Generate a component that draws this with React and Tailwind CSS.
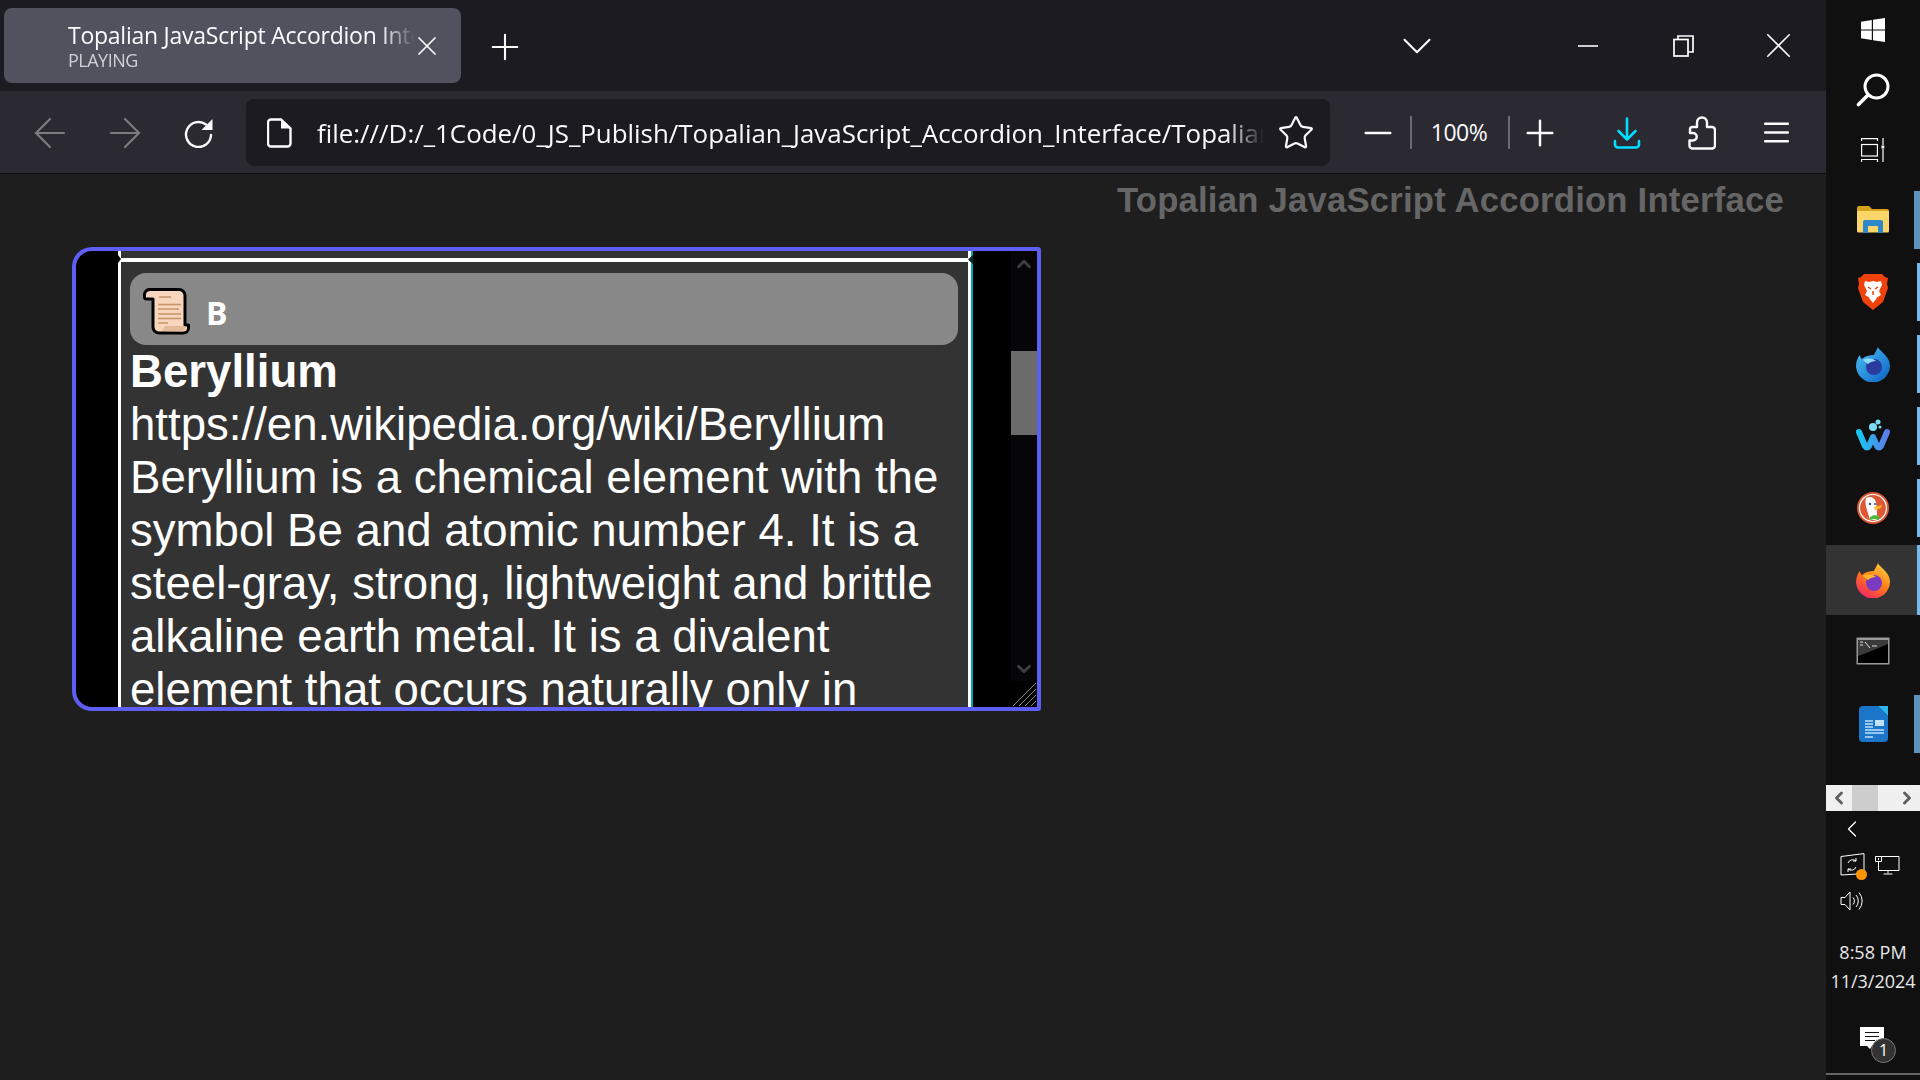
import { X, Plus, Minus, ChevronDown, Star, ChevronUp, ChevronLeft, ChevronRight, ArrowLeft, ArrowRight } from "lucide-react";

const uiFont = "font-['Open_Sans',sans-serif]";

const ReloadIcon = () => (
  <svg width="30" height="30" viewBox="0 0 30 30" fill="none">
    <path d="M27 17a12.500 12.500 0 1 1-5-10.500" stroke="#fbfbfe" strokeWidth="2.400" strokeLinecap="round" />
    <path d="M28.500 1v11H17.500z" fill="#fbfbfe" />
  </svg>
);

const FileIcon = () => (
  <svg width="25" height="30" viewBox="0 0 25 30" fill="none">
    <path d="M4 1.500h10l9.500 9v15a3 3 0 0 1-3 3H4a3 3 0 0 1-3-3v-21a3 3 0 0 1 3-3z" stroke="#fbfbfe" strokeWidth="2.400" />
    <path d="M14 1.500v9h9.500z" fill="#fbfbfe" />
  </svg>
);

const DownloadIcon = () => (
  <svg width="28" height="32" viewBox="0 0 28 32" fill="none" stroke="#00ddff" strokeWidth="2.600" strokeLinecap="round" strokeLinejoin="round">
    <path d="M14 1.500v21M5.500 14l8.500 8.500 8.500-8.500" />
    <path d="M2 24v3.500a3 3 0 0 0 3 3h18a3 3 0 0 0 3-3V24" />
  </svg>
);

const PuzzleIcon = () => (
  <svg width="28" height="34" viewBox="0 0 28 34" fill="none" stroke="#fbfbfe" strokeWidth="2.400" strokeLinejoin="round">
    <path d="M4 32.500h20a3 3 0 0 0 3-3V14a3 3 0 0 0-3-3h-5V6.500a5 5 0 0 0-10 0V11H4.500A2.500 2.500 0 0 0 2 13.500V17h3a3.500 3.500 0 0 1 0 7.500H1.500v5a3 3 0 0 0 2.500 3z" />
  </svg>
);

const HamburgerIcon = () => (
  <svg width="25" height="21" viewBox="0 0 25 21" fill="#fbfbfe">
    <rect y="0.500" width="25" height="2.400" rx="1" />
    <rect y="9.300" width="25" height="2.400" rx="1" />
    <rect y="18" width="25" height="2.400" rx="1" />
  </svg>
);

const RestoreIcon = () => (
  <svg width="21" height="22" viewBox="0 0 21 22" fill="none" stroke="#fff" strokeWidth="1.700">
    <rect x="1" y="4.500" width="14" height="16.500" />
    <path d="M5 4.500V1h15v16h-5" />
  </svg>
);

const ScrollGlyph = () => (
  <svg width="48" height="47" viewBox="0 0 48 47" className="mt-[5px]">
    <path d="M8 1.500h28a6 6 0 0 1 6 6V37h3.500v3a5 5 0 0 1-5 5H16a6 6 0 0 1-6-6V11H3.500a2 2 0 0 1-2-2V7a5.500 5.500 0 0 1 6.500-5.500z" fill="#f8d5bd" stroke="#000" strokeWidth="3" strokeLinejoin="round" />
    <path d="M16 9h12M15 16.500h23M15 21h21M15 26h23M15 30.500h23M15 35h10" stroke="#c39468" strokeWidth="1.700" />
    <path d="M19 43l3-5h20v3l-3 2.500z" fill="#e5b99a" />
  </svg>
);

const WindowsLogo = () => (
  <svg width="24" height="24" viewBox="0 0 24 24" fill="#fff">
    <path d="M0 3.800 10.800 2v9.400H0zM12 1.800 24 0v11.400H12zM0 12.600h10.800V22L0 20.300zM12 12.600h12V24l-12-1.800z" />
  </svg>
);

const SearchIcon = () => (
  <svg width="34" height="34" viewBox="0 0 34 34" fill="none" stroke="#fff">
    <circle cx="20.500" cy="13.500" r="11.500" strokeWidth="3" />
    <path d="M12 22 2.500 31.500" strokeWidth="3.600" strokeLinecap="round" />
  </svg>
);

const TaskViewIcon = () => (
  <svg width="24" height="24" viewBox="0 0 24 24" fill="none" stroke="#fff" strokeWidth="1.200">
    <path d="M.5 3V.6h16V3M.5 24v-2.500h16V24M22 0v7M22 11v13" />
    <rect x=".6" y="6.500" width="15.800" height="11.500" />
    <rect x="20.500" y="7.500" width="2.800" height="3" fill="#fff" stroke="none" />
  </svg>
);

const FolderLogo = () => (
  <svg width="32" height="28" viewBox="0 0 32 28">
    <path d="M0 2a2 2 0 0 1 2-2h10l3 3h15a2 2 0 0 1 2 2v3H0z" fill="#d9a21b" />
    <path d="M0 5h32v20a1.500 1.500 0 0 1-1.500 1.500h-29A1.500 1.500 0 0 1 0 25z" fill="#fcd669" />
    <path d="M6 27V16a2 2 0 0 1 2-2h16a2 2 0 0 1 2 2v11h-5v-7H11v7z" fill="#2f88c9" />
  </svg>
);

const BraveLogo = () => (
  <svg width="30" height="36" viewBox="0 0 30 36">
    <path d="M6 0h18l3 3 3 1-1 6 1 4-5 14-10 8-10-8L0 14l1-4-1-6 3-1z" fill="#f1420b" />
    <path d="M7 7l4 1 4-1 4 1 4-1 1 4-3 6 2 4-5 3-3 1-3-1-5-3 2-4-3-6z" fill="#fff" />
    <path d="M11 24l4-2 4 2-4 5z" fill="#fff" />
    <path d="M10 13l3 2M20 13l-3 2M15 17v4" stroke="#f1420b" strokeWidth="1.500" />
  </svg>
);

const FirefoxDevLogo = () => (
  <svg width="34" height="35" viewBox="0 0 34 35">
    <defs>
      <linearGradient id="ffd" x1="0" y1="0" x2="1" y2="1">
        <stop offset="0" stopColor="#4cc3f5" />
        <stop offset="1" stopColor="#0a5fc4" />
      </linearGradient>
    </defs>
    <path d="M22 0c1 4 11 8 12 18a17 17 0 0 1-34 1c0-5 2-9 4-11 0 2 1 3 2 4 3-3 7-4 12-4 1-3 3-5 4-8z" fill="url(#ffd)" />
    <circle cx="18" cy="20" r="8" fill="#2a3a9f" />
    <path d="M7 13c4-2 9-2 13 1-3 0-6 1-8 3z" fill="#8fdcf7" />
  </svg>
);

const WaterfoxLogo = () => (
  <svg width="36" height="36" viewBox="0 0 36 36" fill="none">
    <defs>
      <linearGradient id="wf" x1="0" y1="0" x2="1" y2="0">
        <stop offset="0" stopColor="#19c6f0" />
        <stop offset="1" stopColor="#5b7de8" />
      </linearGradient>
    </defs>
    <path d="M4 14l6 14q2 3 4 0l4-9 4 9q2 3 4 0l6-14" stroke="url(#wf)" strokeWidth="6" strokeLinecap="round" strokeLinejoin="round" />
    <circle cx="18" cy="9" r="4" fill="#7adcf5" />
    <circle cx="23" cy="4" r="2.500" fill="#7adcf5" />
    <circle cx="25" cy="9" r="1.500" fill="#7adcf5" />
  </svg>
);

const DuckLogo = () => (
  <svg width="32" height="32" viewBox="0 0 32 32">
    <circle cx="16" cy="16" r="16" fill="#de5833" />
    <circle cx="16" cy="16" r="13.500" fill="none" stroke="#fff" strokeWidth="1.200" />
    <path d="M9 6c4-2 9-1 10 5 1 5 1 10 1 17h-7C11 20 7 12 9 6z" fill="#fff" />
    <path d="M17 15l8-2-1 3-6 2z" fill="#fdb52b" />
    <path d="M13 25l4-2 5 1v4l-5-1-4 1z" fill="#4cba3c" />
    <circle cx="13" cy="12" r="1.200" fill="#2d4f8e" />
    <circle cx="18" cy="12" r="1" fill="#2d4f8e" />
  </svg>
);

const FirefoxLogo = () => (
  <svg width="34" height="35" viewBox="0 0 34 35">
    <defs>
      <linearGradient id="ff" x1="0.800" y1="0" x2="0.200" y2="1">
        <stop offset="0" stopColor="#ffd13a" />
        <stop offset="0.500" stopColor="#ff7a18" />
        <stop offset="1" stopColor="#f21d6b" />
      </linearGradient>
    </defs>
    <path d="M22 0c1 4 11 8 12 18a17 17 0 0 1-34 1c0-5 2-9 4-11 0 2 1 3 2 4 3-3 7-4 12-4 1-3 3-5 4-8z" fill="url(#ff)" />
    <circle cx="18" cy="20" r="8" fill="#7a3bc2" />
    <path d="M7 13c4-2 9-2 13 1-3 0-6 1-8 3z" fill="#ffb52e" />
  </svg>
);

const CmdLogo = () => (
  <svg width="34" height="28" viewBox="0 0 34 28">
    <rect x="0.500" y="0.500" width="33" height="27" fill="#999" />
    <rect x="2" y="3" width="30" height="23" fill="#000" />
    <path d="M2 3h30v4L8 17l-6 2z" fill="#3a3a3a" />
    <path d="M4 5h3M4 8h3M9 5l5 6M16 9h5" stroke="#ddd" strokeWidth="1" />
  </svg>
);

const WriterLogo = () => (
  <svg width="29" height="36" viewBox="0 0 29 36">
    <path d="M4 0h15l10 10v22a4 4 0 0 1-4 4H4a4 4 0 0 1-4-4V4a4 4 0 0 1 4-4z" fill="#1b76c9" />
    <path d="M19 0h10v10z" fill="#2bb8ee" />
    <path d="M6 15h8M6 18h8M6 21h8M6 24h19M6 27h19M6 31h8" stroke="#bfe2f7" strokeWidth="1.500" />
    <rect x="16" y="14" width="9" height="6" fill="#bfe2f7" />
  </svg>
);

const SyncTrayIcon = () => (
  <div className="relative w-[26px] h-[24px]">
    <svg width="26" height="24" viewBox="0 0 26 24" fill="none" stroke="#fff" strokeWidth="1">
      <path d="M1 3.500 24 .6v20L1 22z" />
      <path d="M8 10a5 5 0 0 1 8-2M16 14a5 5 0 0 1-8 2M16 5v3h-3M8 19v-3h3" />
    </svg>
    <span className="absolute right-[-1px] bottom-[-3px] w-[11px] h-[11px] rounded-full bg-[#ff9500]" />
  </div>
);

const MonitorTrayIcon = () => (
  <svg width="25" height="19" viewBox="0 0 25 19" fill="none" stroke="#fff" strokeWidth="1">
    <path d="M.5.500h6v5h-6zM3.500 2v2M3.500 5.500v9M3.500 14.500H24V.500H6.500M13 14.500v3M8.500 18h9" />
  </svg>
);

const SpeakerTrayIcon = () => (
  <svg width="24" height="20" viewBox="0 0 24 20" fill="none" stroke="#fff" strokeWidth="1">
    <path d="M1 6.500h4L10 1v18l-5-5.500H1zM13 6.500a5 5 0 0 1 0 7M16 4a9 9 0 0 1 0 12M19 1.500a13 13 0 0 1 0 17" />
  </svg>
);

const taskApps = [
  { id: "folder", logo: <FolderLogo />, row: "h-[58px] mb-[14px] pl-[6px]", mark: "w-[6px] bg-[#5e93bd]" },
  { id: "brave", logo: <BraveLogo />, row: "h-[58px] mb-[14px] pl-[3px]", mark: "w-[3px] bg-[#76b9ed]" },
  { id: "firefoxdev", logo: <FirefoxDevLogo />, row: "h-[58px] mb-[14px] pl-[3px]", mark: "w-[3px] bg-[#76b9ed]" },
  { id: "waterfox", logo: <WaterfoxLogo />, row: "h-[58px] mb-[14px] pl-[3px]", mark: "w-[3px] bg-[#76b9ed]" },
  { id: "duck", logo: <DuckLogo />, row: "h-[58px] mb-[8px] pl-[3px]", mark: "w-[3px] bg-[#76b9ed]" },
  { id: "firefox", logo: <FirefoxLogo />, row: "h-[70px] pl-[3px] bg-[#333333]", mark: "w-[3px] bg-[#76b9ed]" },
  { id: "cmd", logo: <CmdLogo />, row: "h-[72px] mb-[8px]", mark: "" },
  { id: "writer", logo: <WriterLogo />, row: "h-[58px] mb-[32px] pl-[6px]", mark: "w-[6px] bg-[#5e93bd]" },
];

const Taskbar = () => (
  <aside className={`w-[94px] h-full shrink-0 bg-[#101010] flex flex-col ${uiFont}`}>
    <div className="h-[191px] flex flex-col items-center pt-[18px]">
      <WindowsLogo />
      <div className="mt-[31px] mb-[31px]"><SearchIcon /></div>
      <TaskViewIcon />
    </div>
    {taskApps.map((app) => (
      <div key={app.id} className={`${app.row} flex justify-between`}>
        <div className="flex-1 flex items-center justify-center">{app.logo}</div>
        <div className={app.mark} />
      </div>
    ))}
    <div className="h-[26px] bg-[#f0f0f0] flex items-center justify-between px-[3px]">
      <ChevronLeft size={20} strokeWidth={3.500} className="text-[#606060]" />
      <div className="w-[26px] h-full bg-[#cdcdcd]" />
      <div className="w-[12px]" />
      <ChevronRight size={20} strokeWidth={3.500} className="text-[#606060]" />
    </div>
    <div className="pl-[12px] pt-[4px]">
      <ChevronLeft size={28} strokeWidth={1.100} className="text-white" />
    </div>
    <div className="flex items-center gap-[9px] pl-[14px] mt-[10px]">
      <SyncTrayIcon />
      <MonitorTrayIcon />
    </div>
    <div className="pl-[14px] mt-[14px]"><SpeakerTrayIcon /></div>
    <div className="mt-[27px] text-center text-[18px] leading-[29px] text-[#e8e8e8] whitespace-nowrap">
      <div>8:58 PM</div>
      <div>11/3/2024</div>
    </div>
    <div className="relative w-[24px] h-[24px] mt-[31px] ml-[34px]">
      <svg width="24" height="24" viewBox="0 0 24 24">
        <path d="M0 0h24v19H12l-2 3-3-3H0z" fill="#fff" />
        <path d="M5 5.500h14M5 9.500h14M5 13.500h10" stroke="#101010" strokeWidth="1.200" />
      </svg>
      <span className="absolute left-[11px] top-[11px] w-[25px] h-[25px] rounded-full bg-[#333] border border-[#777] text-white text-[16px] leading-[23px] text-center">1</span>
    </div>
    <div className="mt-auto mb-[5px] h-[2px] bg-[#666]" />
  </aside>
);

const BrowserTabs = () => (
  <div className={`h-[91px] shrink-0 bg-[#1c1b22] flex text-[#fbfbfe] ${uiFont}`}>
    <div className="w-[457px] h-[75px] ml-[4px] mt-[8px] shrink-0 rounded-[8px] bg-[#52525e] flex items-center pl-[64px]">
      <div className="w-[347px] overflow-hidden pt-[1px] [mask-image:linear-gradient(to_right,black_90%,transparent)]">
        <div className="text-[23px] leading-[29px] whitespace-nowrap tracking-[-0.25px]">Topalian JavaScript Accordion Interface</div>
        <div className="text-[18px] leading-[21px] text-[#d0d0d5] tracking-[-0.5px]">PLAYING</div>
      </div>
      <div className="w-[24px] flex justify-center"><X size={32} strokeWidth={1.300} className="shrink-0" /></div>
    </div>
    <div className="w-[88px] shrink-0 flex items-center justify-center pt-[3px]"><Plus size={42} strokeWidth={1.200} /></div>
    <div className="w-[80px] ml-[828px] shrink-0 flex items-center justify-center"><ChevronDown size={50} strokeWidth={1} /></div>
    <div className="w-[76px] ml-[93px] shrink-0 flex items-center justify-center"><div className="h-[2px] w-[20px] bg-[#fbfbfe] opacity-80" /></div>
    <div className="w-[114px] shrink-0 flex items-center justify-center"><RestoreIcon /></div>
    <div className="w-[76px] shrink-0 flex items-center justify-center"><X size={43} strokeWidth={0.900} className="text-[#fbfbfe]" /></div>
  </div>
);

const Toolbar = () => (
  <div className={`h-[83px] shrink-0 bg-[#2b2a33] border-b border-[#0c0c0d] flex items-start pt-[8px] text-[#fbfbfe] ${uiFont}`}>
    <div className="h-[67px] flex items-center pl-[12px]">
      <div className="w-[75px] flex justify-center"><ArrowLeft size={48} strokeWidth={1.100} className="text-[#7b7b80]" /></div>
      <div className="w-[75px] flex justify-center"><ArrowRight size={48} strokeWidth={1.100} className="text-[#7b7b80]" /></div>
      <div className="w-[75px] flex justify-center pr-[2px]"><ReloadIcon /></div>
    </div>
    <div className="w-[1084px] h-[67px] ml-[9px] rounded-[8px] bg-[#1c1b22] flex items-center pl-[21px]">
      <FileIcon />
      <div className="w-[947px] ml-[25px] overflow-hidden text-[25.9px] leading-[36px] whitespace-nowrap [mask-image:linear-gradient(to_right,black_96%,transparent)]">
        file:///D:/_1Code/0_JS_Publish/Topalian_JavaScript_Accordion_Interface/Topalian_JavaScript_Accordion_Interface.html
      </div>
      <div className="w-[60px] ml-[2px] flex justify-center"><Star size={38} strokeWidth={1.400} className="shrink-0" /></div>
    </div>
    <div className="h-[67px] flex items-center">
      <div className="w-[66px] ml-[14px] flex justify-center pl-[1px]"><Minus size={42} strokeWidth={1.400} /></div>
      <div className="w-[2px] h-[33px] bg-[#6a6a72]" />
      <div className="w-[96px] text-center text-[23px] tracking-[-0.5px] pr-[2px]">100%</div>
      <div className="w-[2px] h-[33px] bg-[#6a6a72]" />
      <div className="w-[60px] flex justify-center"><Plus size={42} strokeWidth={1.400} /></div>
      <div className="w-[74px] ml-[20px] flex justify-center"><DownloadIcon /></div>
      <div className="w-[76px] flex justify-center"><PuzzleIcon /></div>
      <div className="w-[74px] flex justify-center pr-[1px]"><HamburgerIcon /></div>
    </div>
  </div>
);

const AccordionBox = () => (
  <div className="w-[969px] h-[464px] ml-[72px] border-[4px] border-[#5e5ef5] rounded-tl-[20px] rounded-bl-[20px] rounded-tr-[3px] rounded-br-[3px] bg-black flex overflow-hidden">
    <div className="relative w-[855px] h-full ml-[42px] flex shrink-0">
      <div className="flex-1 h-full bg-[#333333] border-l-[3px] border-r-[3px] border-white overflow-hidden pt-[7px]">
        <div className="border-t-[4px] border-white pt-[11px] pl-[9px] pr-[10px] text-white font-['Liberation_Sans',sans-serif] text-[45.6px] leading-[53px]">
          <div className="h-[72px] rounded-[16px] bg-[#888888] flex items-center pl-[13px]">
            <ScrollGlyph />
            <span className={`ml-[15px] text-[32px] font-bold mt-[6px] ${uiFont}`}>B</span>
          </div>
          <div className="font-bold">Beryllium</div>
          <div>https://en.wikipedia.org/wiki/Beryllium</div>
          <div>
            Beryllium is a chemical element with the symbol Be and atomic number 4. It is a steel-gray, strong, lightweight and brittle alkaline earth metal. It is a divalent element that occurs naturally only in combination with other elements to form minerals.
          </div>
        </div>
      </div>
      <div className="w-[2px] h-full bg-[#00a5b5]" />
      {/* little notches where the rounded item corners meet */}
      <svg className="absolute left-0 top-[4px]" width="4" height="8" viewBox="0 0 4 8"><path d="M0 0l3 4-3 4z" fill="#000" /></svg>
      <svg className="absolute right-0 top-[4px]" width="6" height="9" viewBox="0 0 6 9"><path d="M6 0 1 4.500 6 9z" fill="#04282c" /></svg>
    </div>
    <div className="ml-[38px] w-[26px] flex flex-col">
      <div className="h-[430px] bg-[#060608] flex flex-col items-center">
        <ChevronUp size={22} strokeWidth={3} className="text-[#3f3f3f] mt-[2px]" />
        <div className="w-full h-[84px] bg-[#6b6b6b] mt-[76px]" />
        <ChevronDown size={22} strokeWidth={3} className="text-[#3f3f3f] mt-[223px]" />
      </div>
      <svg width="26" height="26" viewBox="0 0 26 26" stroke="#888" strokeWidth="1">
        <path d="M25 2 2 25M25 8 8 25M25 14 14 25M25 20 20 25" />
      </svg>
    </div>
  </div>
);

export default function App() {
  return (
    <div className="w-[1920px] h-[1080px] flex overflow-hidden">
      <div className="flex-1 flex flex-col min-w-0">
        <BrowserTabs />
        <Toolbar />
        <main className="flex-1 bg-[#1e1e1e] pt-[7px]">
          <h1 className="text-right pr-[42px] mb-[28px] font-['Liberation_Sans',sans-serif] font-bold text-[34.7px] leading-[38px] tracking-[0.2px] text-[#666666]">
            Topalian JavaScript Accordion Interface
          </h1>
          <AccordionBox />
        </main>
      </div>
      <Taskbar />
    </div>
  );
}
